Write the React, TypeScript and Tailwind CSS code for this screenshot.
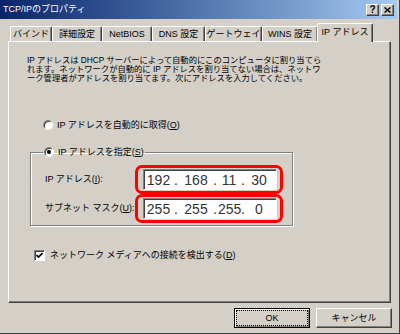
const jp = "font-['Liberation_Sans','Noto_Sans_CJK_JP',sans-serif]";

const tabs = [
  { label: "バインド", w: "w-[42px]" },
  { label: "詳細設定", w: "w-[50px]" },
  { label: "NetBIOS", w: "w-[50px]" },
  { label: "DNS 設定", w: "w-[53px]" },
  { label: "ゲートウェイ", w: "w-[57px]" },
  { label: "WINS 設定", w: "w-[56px]" },
];

function Radio({ checked }: { checked?: boolean }) {
  return (
    <span className="flex h-[10px] w-[10px] shrink-0 items-center justify-center rounded-full border border-t-[#808080] border-l-[#808080] border-r-white border-b-white bg-white shadow-[inset_1px_1px_#404040]">
      {checked && <span className="h-[4px] w-[4px] rounded-full bg-black" />}
    </span>
  );
}

function Checkbox() {
  return (
    <span className="flex h-[11px] w-[11px] shrink-0 items-center justify-center border border-t-[#808080] border-l-[#808080] border-r-white border-b-white bg-white shadow-[inset_1px_1px_#404040]">
      <svg width="7" height="7" viewBox="0 0 7 7">
        <path d="M0.5 3 L2.5 5 L6.5 1" stroke="#000" strokeWidth="1.6" fill="none" />
      </svg>
    </span>
  );
}

function IpField({ parts }: { parts: string[] }) {
  const widths = ["w-[27px]", "w-[32px]", "w-[22px]", "w-[26px]"];
  const dots = ["w-[8px]", "w-[6px]", "w-[6px]"];
  return (
    <div className="flex h-[21px] w-[134px] items-center border border-t-[#808080] border-l-[#808080] border-r-white border-b-white bg-white pl-px shadow-[inset_1px_1px_#404040] font-['Liberation_Sans',sans-serif] text-[14px] leading-none text-[#333]">
      {parts.map((p, i) => (
        <div key={i} className="flex items-center">
          <span className={`${widths[i]} text-center`}>{p}</span>
          {i < 3 && <span className={`${dots[i]} text-center`}>.</span>}
        </div>
      ))}
    </div>
  );
}

export default function App() {
  return (
    <div className={`flex h-[334px] w-[400px] flex-col overflow-hidden border-r border-b border-r-[#404040] border-b-[#404040] bg-[#d4d0c8] text-[9px] leading-none text-black ${jp}`}>
      {/* title bar */}
      <div className="mr-[2px] flex h-[19px] shrink-0 items-center justify-between bg-linear-to-r from-[#0a246a] to-[#a6caf0] pl-[3px] pr-[3px]">
        <span className="text-[9px] text-white">TCP/IPのプロパティ</span>
        <div className="flex gap-[2px]">
          <span className="flex h-[12px] w-[13px] items-center justify-center border border-t-white border-l-white border-r-[#404040] border-b-[#404040] bg-[#d4d0c8] text-[10px] font-bold shadow-[inset_-1px_-1px_#808080]">?</span>
          <span className="flex h-[12px] w-[13px] items-center justify-center border border-t-white border-l-white border-r-[#404040] border-b-[#404040] bg-[#d4d0c8] shadow-[inset_-1px_-1px_#808080]">
            <svg width="7" height="6" viewBox="0 0 7 6">
              <path d="M0.5 0.5 L6.5 5.5 M6.5 0.5 L0.5 5.5" stroke="#000" strokeWidth="1.5" />
            </svg>
          </span>
        </div>
      </div>

      {/* tabs */}
      <div className="flex h-[22px] shrink-0 items-end pl-[10px]">
        {tabs.map((t) => (
          <div
            key={t.label}
            className={`flex h-[15px] ${t.w} items-center justify-center whitespace-nowrap rounded-t-[2px] border-t border-l border-r border-t-white border-l-white border-r-[#404040] shadow-[inset_-1px_0_#808080]`}
          >
            {t.label}
          </div>
        ))}
        <div className="relative z-10 -mb-px ml-[-1px] flex h-[19px] w-[56px] items-center justify-center whitespace-nowrap rounded-t-[2px] border-t border-l border-r border-t-white border-l-white border-r-[#404040] bg-[#d4d0c8] pb-[2px] shadow-[inset_-1px_0_#808080]">
          IP アドレス
        </div>
      </div>

      {/* panel */}
      <div className="mx-[8px] h-[262px] shrink-0 border border-t-white border-l-white border-r-[#404040] border-b-[#404040] pl-[1px] shadow-[inset_-1px_-1px_#808080]">
        <p className="ml-[17px] mt-[14px] whitespace-nowrap text-[8.3px] leading-[9px]">
          IP アドレスは DHCP サーバーによって自動的にこのコンピュータに割り当てら
          <br />
          れます。ネットワークが自動的に IP アドレスを割り当てない場合は、ネットワ
          <br />
          ーク管理者がアドレスを割り当てます。次にアドレスを入力してください。
        </p>

        <div className="ml-[33px] mt-[37px] flex h-[10px] items-center gap-[4px]">
          <Radio />
          <span>
            IP アドレスを自動的に取得(<span className="underline">O</span>)
          </span>
        </div>

        <fieldset className="ml-[20px] mt-[17px] w-[263px] border border-[#808080] pb-[2px] shadow-[inset_1px_1px_#fff,1px_1px_#fff]">
          <legend className="ml-[12px] flex h-[10px] items-center gap-[4px] px-px">
            <Radio checked />
            <span>
              IP アドレスを指定(<span className="underline">S</span>)
            </span>
          </legend>
          <div className="mt-[8px] flex items-center pl-[14px]">
            <span className="w-[90px] whitespace-nowrap">
              IP アドレス(<span className="underline">I</span>):
            </span>
            <div className="flex h-[29px] w-[148px] items-center rounded-[7px] border-[3px] border-[#ff0000] pl-[5px]">
              <IpField parts={["192", "168", "11", "30"]} />
            </div>
          </div>
          <div className="flex items-center pl-[14px]">
            <span className="w-[90px] whitespace-nowrap">
              サブネット マスク(<span className="underline">U</span>):
            </span>
            <div className="flex h-[29px] w-[148px] items-center rounded-[7px] border-[3px] border-[#ff0000] pl-[5px]">
              <IpField parts={["255", "255", "255", "0"]} />
            </div>
          </div>
        </fieldset>

        <div className="ml-[24px] mt-[24px] flex items-center gap-[5px]">
          <Checkbox />
          <span>
            ネットワーク メディアへの接続を検出する(<span className="underline">D</span>)
          </span>
        </div>
      </div>

      {/* buttons */}
      <div className="mt-[5px] flex justify-end gap-[6px] pr-[7px]">
        <button className="flex h-[20px] w-[76px] items-center justify-center border border-black bg-[#d4d0c8] p-[1px] shadow-[inset_1px_1px_#fff,inset_-1px_-1px_#808080]">
          <span className="flex h-full w-full items-center justify-center border border-dotted border-black">OK</span>
        </button>
        <button className="flex h-[20px] w-[76px] items-center justify-center border border-t-white border-l-white border-r-[#404040] border-b-[#404040] bg-[#d4d0c8] shadow-[inset_-1px_-1px_#808080]">
          キャンセル
        </button>
      </div>
    </div>
  );
}
